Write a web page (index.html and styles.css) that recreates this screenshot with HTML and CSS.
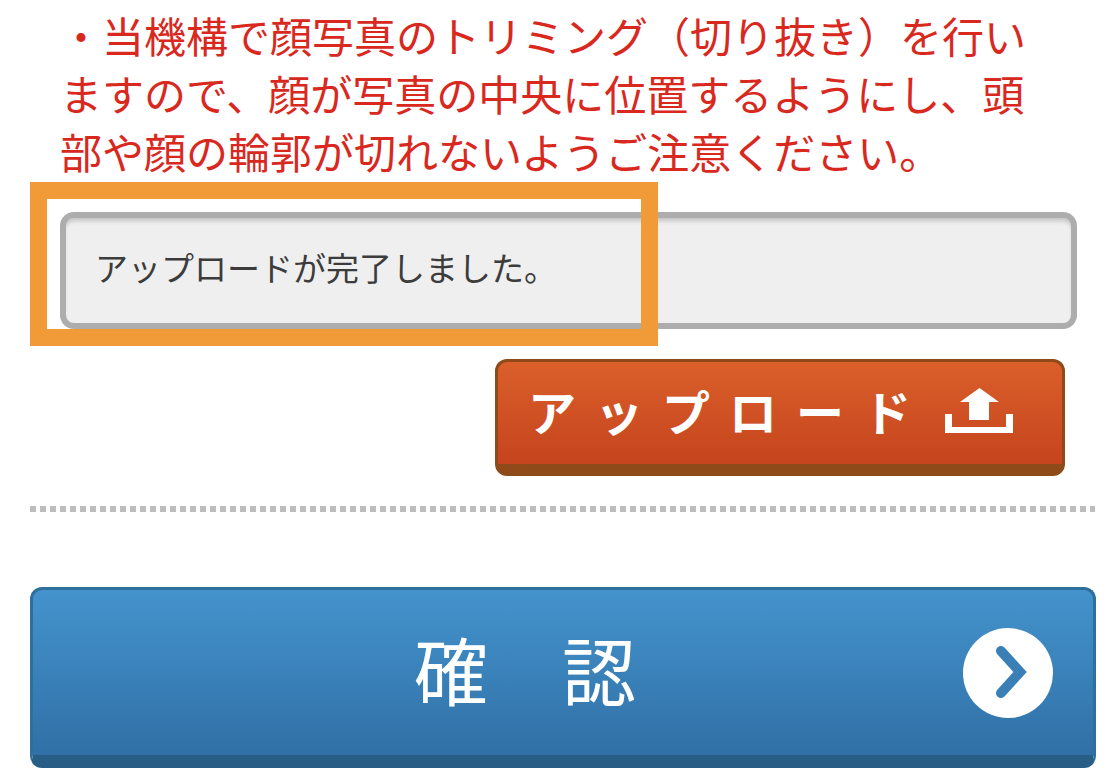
FILE: index.html
```html
<!DOCTYPE html>
<html lang="ja">
<head>
    <meta charset="UTF-8">
    <meta name="viewport" content="width=device-width, initial-scale=1.0">
    <title>アップロード</title>
    <link rel="stylesheet" href="styles.css">
</head>
<body>
    <div class="container">
        <p class="notice">・当機構で顔写真のトリミング（切り抜き）を行い<br>ますので、顔が写真の中央に位置するようにし、頭<br>部や顔の輪郭が切れないようご注意ください。</p>

        <div class="upload-area">
            <div class="status-field">アップロードが完了しました。</div>
            <div class="highlight"></div>
            <div class="upload-row">
                <button class="btn btn-upload" type="button">
                    <span class="upload-label">アップロード</span>
                    <svg class="upload-icon" width="68" height="45" viewBox="0 0 68 45">
                        <path d="M34.500 0 L54 14 L44 14 L44 32 L24 32 L24 14 L15 14 Z" fill="#fff"/>
                        <path d="M0 26 H7 V39 H61 V26 H68 V45 H0 Z" fill="#fff"/>
                    </svg>
                </button>
            </div>
        </div>

        <div class="divider"></div>

        <button class="btn btn-confirm" type="button">
            <span class="confirm-label">確　認</span>
            <svg class="confirm-icon" width="90" height="90" viewBox="0 0 90 90">
                <circle cx="45" cy="45" r="45" fill="#fff"/>
                <path d="M38 23 L57 44 L38 65" fill="none" stroke="#3a80b6" stroke-width="10" stroke-linecap="round"/>
            </svg>
        </button>
    </div>
</body>
</html>
```

FILE: styles.css
```css
body {
    margin: 0;
    background-color: #fff;
    font-family: "Noto Sans CJK JP", "Liberation Sans", sans-serif;
}

.container {
    padding: 6px 24px 0 30px;
}

.notice {
    margin: 0 0 0 30px;
    font-size: 42px;
    line-height: 58px;
    color: #d9281e;
    white-space: nowrap;
}

.upload-area {
    position: relative;
    margin-top: 32px;
}

.status-field {
    box-sizing: border-box;
    height: 117px;
    margin: 0 19px 0 30px;
    padding: 0 29px;
    border: 6px solid #adadad;
    border-radius: 14px;
    background-color: #efefef;
    box-shadow: inset 0 5px 4px -2px #c4c4c4;
    font-size: 33px;
    line-height: 98px;
    color: #3c3c3c;
}

.highlight {
    position: absolute;
    top: -30px;
    left: 0;
    box-sizing: border-box;
    width: 628px;
    height: 164px;
    border: 17px solid #f19a38;
}

.upload-row {
    display: flex;
    justify-content: flex-end;
    margin: 30px 31px 0 0;
}

.btn {
    display: flex;
    align-items: center;
    box-sizing: border-box;
    padding: 0;
    font-family: inherit;
    color: #fff;
}

.btn-upload {
    width: 570px;
    height: 117px;
    padding: 0 49px 6px 30px;
    justify-content: space-between;
    border: 3px solid #8f4a1a;
    border-bottom-width: 12px;
    border-radius: 12px;
    background: linear-gradient(#da5f2a, #c6441e);
}

.upload-label {
    font-size: 48px;
    font-weight: 700;
    letter-spacing: 19px;
    white-space: nowrap;
}

.upload-icon {
    filter: blur(0.5px);
}

.divider {
    height: 6px;
    margin: 30px 1px 0 0;
    background: repeating-linear-gradient(90deg, #bdbdbd 0, #bdbdbd 6px, transparent 6px, transparent 10px);
}

.btn-confirm {
    position: relative;
    justify-content: center;
    width: 1066px;
    height: 181px;
    margin-top: 75px;
    padding: 0 76px 10px 0;
    border: 3px solid #2f6f9c;
    border-bottom-width: 13px;
    border-bottom-color: #285e86;
    border-radius: 12px;
    background: linear-gradient(#4493cd, #3070a6);
}

.confirm-label {
    font-size: 74px;
    line-height: 1;
    white-space: nowrap;
}

.confirm-icon {
    position: absolute;
    top: 38px;
    right: 40px;
    filter: blur(0.5px);
}
```
